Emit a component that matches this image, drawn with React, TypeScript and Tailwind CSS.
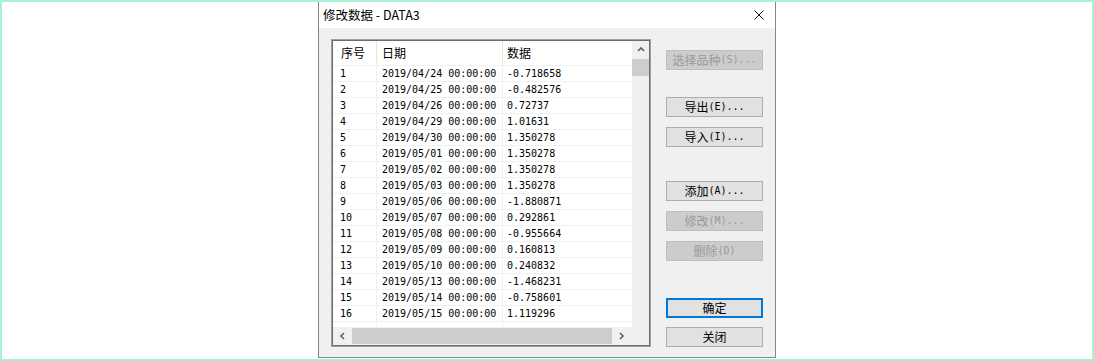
import React from "react";

const rows: [string, string, string][] = [
  ["1", "2019/04/24 00:00:00", "-0.718658"],
  ["2", "2019/04/25 00:00:00", "-0.482576"],
  ["3", "2019/04/26 00:00:00", "0.72737"],
  ["4", "2019/04/29 00:00:00", "1.01631"],
  ["5", "2019/04/30 00:00:00", "1.350278"],
  ["6", "2019/05/01 00:00:00", "1.350278"],
  ["7", "2019/05/02 00:00:00", "1.350278"],
  ["8", "2019/05/03 00:00:00", "1.350278"],
  ["9", "2019/05/06 00:00:00", "-1.880871"],
  ["10", "2019/05/07 00:00:00", "0.292861"],
  ["11", "2019/05/08 00:00:00", "-0.955664"],
  ["12", "2019/05/09 00:00:00", "0.160813"],
  ["13", "2019/05/10 00:00:00", "0.240832"],
  ["14", "2019/05/13 00:00:00", "-1.468231"],
  ["15", "2019/05/14 00:00:00", "-0.758601"],
  ["16", "2019/05/15 00:00:00", "1.119296"],
];

const cjk = "font-['Noto_Sans_CJK_SC',sans-serif] text-[12px]";
const mono = "font-['DejaVu_Sans_Mono','Liberation_Mono',monospace] text-[10px]";

const Label = ({ text }: { text: string }) => {
  const i = text.indexOf("(");
  const main = i < 0 ? text : text.slice(0, i);
  const suffix = i < 0 ? "" : text.slice(i);
  return (
    <span className="flex items-center justify-center leading-none">
      <span className={cjk}>{main}</span>
      {suffix && <span className={mono}>{suffix}</span>}
    </span>
  );
};

const Btn = ({
  text,
  disabled,
  focused,
  mt,
}: {
  text: string;
  disabled?: boolean;
  focused?: boolean;
  mt: string;
}) => (
  <div
    className={`${mt} h-[20px] w-full flex items-center justify-center ${
      disabled
        ? "bg-[#cccccc] border border-[#bfbfbf] text-[#9a9a9a]"
        : focused
        ? "bg-[#e1e1e1] border-2 border-[#0078d7] text-black"
        : "bg-[#e1e1e1] border border-[#adadad] text-black"
    }`}
  >
    <Label text={text} />
  </div>
);

const Chevron = ({ dir }: { dir: "up" | "left" | "right" }) => {
  const d =
    dir === "up" ? "M1 5 L4 2 L7 5" : dir === "left" ? "M5 1 L2 4 L5 7" : "M2 1 L5 4 L2 7";
  return (
    <svg width="8" height="8" viewBox="0 0 8 8">
      <path d={d} fill="none" stroke="#606060" strokeWidth="1.6" />
    </svg>
  );
};

export default function App() {
  return (
    <div className="w-[1094px] h-[361px] border-2 border-[#aaf1d3] bg-white flex justify-center items-start">
      <div className="w-[458px] h-[356px] border-x border-b border-[#858585] flex flex-col">
        {/* title bar */}
        <div className="h-[26px] bg-white flex items-center pl-[4px] pr-[11px]">
          <span className="font-['Noto_Sans_CJK_SC',sans-serif] text-[12.5px] text-black">
            修改数据 - DATA3
          </span>
          <svg className="ml-auto" width="10" height="10" viewBox="0 0 10 10">
            <path d="M0.5 0.5 L9.5 9.5 M9.5 0.5 L0.5 9.5" stroke="#111" strokeWidth="1" />
          </svg>
        </div>

        {/* body */}
        <div className="flex-1 bg-[#f0f0f0] flex pt-[11px] px-[12px] pb-[10px] gap-[15px]">
          {/* list */}
          <div className="w-[320px] h-[308px] border border-[#a0a0a0]">
            <div className="w-full h-full border border-[#6d6d6d] bg-white flex overflow-hidden">
              <div className="w-[299px] flex flex-col">
                <div className="h-[286px] overflow-hidden">
                  <div className="h-[25px] flex border-b border-[#f0f0f0]">
                    <div className={`w-[44px] shrink-0 border-r border-[#e5e5e5] pl-[8px] flex items-center ${cjk}`}>序号</div>
                    <div className={`w-[126px] shrink-0 border-r border-[#e5e5e5] pl-[5px] flex items-center ${cjk}`}>日期</div>
                    <div className={`w-[130px] shrink-0 pl-[4px] flex items-center ${cjk}`}>数据</div>
                  </div>
                  {[...rows, ["", "", ""] as [string, string, string]].map((r, i) => (
                    <div key={i} className={`h-[16px] flex border-b border-[#f0f0f0] text-black ${mono}`}>
                      <div className="w-[44px] shrink-0 border-r border-[#f0f0f0] pl-[7px] flex items-center">{r[0]}</div>
                      <div className="w-[126px] shrink-0 border-r border-[#f0f0f0] pl-[5px] flex items-center whitespace-pre">{r[1]}</div>
                      <div className="w-[130px] shrink-0 pl-[4px] flex items-center">{r[2]}</div>
                    </div>
                  ))}
                </div>
                {/* horizontal scrollbar */}
                <div className="h-[18px] bg-[#f0f0f0] flex items-center">
                  <div className="w-[19px] h-full flex items-center justify-center">
                    <Chevron dir="left" />
                  </div>
                  <div className="w-[260px] h-[16px] bg-[#cdcdcd]" />
                  <div className="flex-1 h-full flex items-center justify-center">
                    <Chevron dir="right" />
                  </div>
                </div>
              </div>
              {/* vertical scrollbar */}
              <div className="w-[17px] bg-[#f0f0f0] flex flex-col">
                <div className="h-[17px] flex items-center justify-center">
                  <Chevron dir="up" />
                </div>
                <div className="mt-[1px] h-[17px] w-full bg-[#cdcdcd]" />
              </div>
            </div>
          </div>

          {/* buttons */}
          <div className="w-[97px] flex flex-col">
            <Btn text="选择品种(S)..." disabled mt="mt-[11px]" />
            <Btn text="导出(E)..." mt="mt-[27px]" />
            <Btn text="导入(I)..." mt="mt-[10px]" />
            <Btn text="添加(A)..." mt="mt-[34px]" />
            <Btn text="修改(M)..." disabled mt="mt-[10px]" />
            <Btn text="删除(D)" disabled mt="mt-[10px]" />
            <Btn text="确定" focused mt="mt-[37px]" />
            <Btn text="关闭" mt="mt-[9px]" />
          </div>
        </div>
      </div>
    </div>
  );
}
